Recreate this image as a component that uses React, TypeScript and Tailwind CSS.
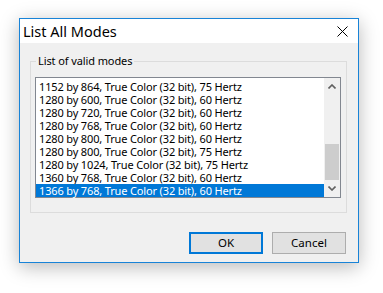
import React from 'react'

const modes = [
  '1152 by 864, True Color (32 bit), 75 Hertz',
  '1280 by 600, True Color (32 bit), 60 Hertz',
  '1280 by 720, True Color (32 bit), 60 Hertz',
  '1280 by 768, True Color (32 bit), 60 Hertz',
  '1280 by 800, True Color (32 bit), 60 Hertz',
  '1280 by 800, True Color (32 bit), 75 Hertz',
  '1280 by 1024, True Color (32 bit), 75 Hertz',
  '1360 by 768, True Color (32 bit), 60 Hertz',
  '1366 by 768, True Color (32 bit), 60 Hertz',
]

const selected = 8

// Small chevron used by the scrollbar arrows
const Chevron = ({ down }: { down?: boolean }) => (
  <svg width="8" height="5" viewBox="0 0 8 5" className={down ? 'rotate-180' : ''}>
    <path d="M0.5 4.5 L4 1 L7.5 4.5" fill="none" stroke="#606060" strokeWidth="1.6" />
  </svg>
)

const App = () => {
  return (
    <div
      className="w-[383px] h-[293px] bg-white pt-[18px] pl-[19px]"
      style={{ fontFamily: '"Noto Sans", "Liberation Sans", sans-serif' }}
    >
      <div className="w-[340px] h-[245px] border border-[#1883d7] bg-[#f0f0f0] flex flex-col shadow-[0_4px_18px_rgba(0,0,0,0.28)]">
        {/* Title bar */}
        <div className="h-[24px] bg-white flex items-center justify-between shrink-0">
          <span className="pl-[3px] text-[14.5px] leading-none text-black">List All Modes</span>
          <svg width="11" height="11" viewBox="0 0 11 11" className="mr-[10px]">
            <path d="M0.5 0.5 L10.5 10.5 M10.5 0.5 L0.5 10.5" stroke="#000" strokeWidth="1" />
          </svg>
        </div>

        {/* Body */}
        <div className="flex-1 flex flex-col pt-[18px] pl-[10px]">
          <div className="relative w-[317px] h-[152px] border border-[#dcdcdc] pt-[15px] pl-[4px]">
            <span className="absolute -top-[8px] left-[5px] px-[2px] bg-[#f0f0f0] text-[11px] leading-[14px] tracking-[-0.1px] text-black">
              List of valid modes
            </span>

            {/* Listbox */}
            <div className="w-[306px] h-[121px] border border-[#828790] bg-white flex">
              <div className="w-[288px] pt-[2px] flex flex-col">
                {modes.map((m, i) => (
                  <div
                    key={i}
                    className={`h-[13px] pl-[3px] text-[11px] leading-[13px] tracking-[-0.15px] whitespace-nowrap ${
                      i === selected ? 'bg-[#0078d7] text-white' : 'text-black'
                    }`}
                  >
                    {m}
                  </div>
                ))}
              </div>

              {/* Scrollbar */}
              <div className="w-[16px] bg-[#f0f0f0] flex flex-col items-center">
                <div className="h-[17px] flex items-center justify-center">
                  <Chevron />
                </div>
                <div className="h-[49px]" />
                <div className="w-[14px] h-[36px] bg-[#cdcdcd]" />
                <div className="flex-1" />
                <div className="h-[17px] flex items-center justify-center">
                  <Chevron down />
                </div>
              </div>
            </div>
          </div>

          {/* Buttons */}
          <div className="flex justify-end gap-[9px] pr-[12px] mt-[19px]">
            <button className="w-[74px] h-[22px] border-2 border-[#0078d7] bg-[#e1e1e1] text-[11.5px] text-black">
              OK
            </button>
            <button className="w-[74px] h-[22px] border border-[#adadad] bg-[#e1e1e1] text-[11.5px] text-black">
              Cancel
            </button>
          </div>
        </div>
      </div>
    </div>
  )
}

export default App
